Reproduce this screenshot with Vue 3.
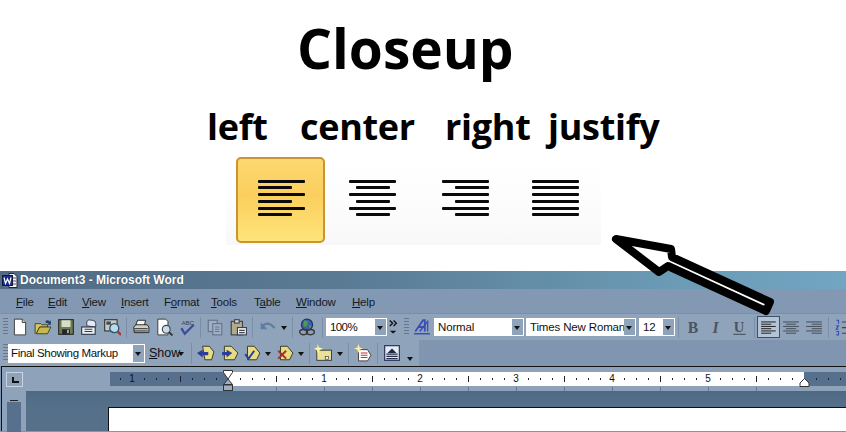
<script setup>
const linesets = {
  left: [47, 34, 47, 34, 47, 34],
  center: [47, 34, 47, 34, 47, 34],
  right: [47, 34, 47, 34, 47, 34],
  justify: [47, 47, 47, 47, 47, 47]
}
const closeup = [
  { id: 'left', cls: 'btn-active' },
  { id: 'center', cls: 'btn-center' },
  { id: 'right', cls: 'btn-right' },
  { id: 'justify', cls: 'btn-justify' }
]
const labels = [
  { t: 'left', w: 93 },
  { t: 'center', w: 145 },
  { t: 'right', w: 103 },
  { t: 'justify', w: 120 }
]
const menus = [
  ['F', 'ile', 32], ['E', 'dit', 34], ['V', 'iew', 39], ['I', 'nsert', 43],
  ['F', 'o', 47, 'rmat'], ['T', 'ools', 43], ['T', 'a', 42, 'ble'], ['W', 'indow', 56], ['H', 'elp', 30]
]
const K = '#1c1c1c'
const icons = {
  newdoc: `<path d="M3 1h7l3 3v11H3z" fill="#fff" stroke="#333" stroke-width=".8"/><path d="M10 1v3h3" fill="#ddd" stroke="#333" stroke-width=".8"/>`,
  open: `<path d="M1 14V5h5l1 1h5v2H5l-3 6" fill="#d8c860" stroke="#3d3d20" stroke-width=".8"/><path d="M2 14l3-6h10l-3 6z" fill="#c8b84e" stroke="#3d3d20" stroke-width=".8"/><path d="M10 3q2-2 4 0l1-1v4h-3l1-1q-1-1-2-.4" fill="#22406a"/>`,
  save: `<rect x="1.500" y="1.500" width="13" height="13" fill="#6b7d55" stroke="#282828"/><rect x="4" y="2" width="8" height="6" fill="#d8dcc8"/><rect x="4.500" y="10" width="7" height="4.500" fill="#22282a"/><rect x="9" y="10.500" width="1.500" height="3" fill="#b8c0b0"/>`,
  permission: `<path d="M6 7V3.500a3 2.500 0 0 1 4-1.500h1a3 3 0 0 1 3 3v3z" fill="#e6eaf0" stroke="#30384a" stroke-width=".8"/><rect x="1.500" y="8" width="12" height="6.500" fill="#eef0f4" stroke="#30384a"/><path d="M4 10h7M4 12h7" stroke="#30384a"/>`,
  search: `<rect x="1.500" y="1.500" width="11" height="10" fill="#c8ccc8" stroke="#303838"/><path d="M3 3h4v3H3zM7 7h3v3H7z" fill="#424a50"/><circle cx="10" cy="9" r="4" fill="#b8dce8" stroke="#305070" stroke-width="1.200"/><path d="M13 12l3 3" stroke="#b03030" stroke-width="2"/>`,
  print: `<path d="M5 2h7l-1 5H3z" fill="#f4f4f0" stroke="${K}" stroke-width=".8"/><path d="M1.500 8l2-2h10l1.500 2v5h-13z" fill="#d0d0c8" stroke="${K}" stroke-width=".8"/><path d="M2 9.500h12M2 11.500h12" stroke="${K}" stroke-width=".8"/>`,
  preview: `<path d="M2.500 1h7l2 2v12h-9z" fill="#fff" stroke="#333" stroke-width=".8"/><circle cx="10" cy="10" r="3.500" fill="#c8dcea" stroke="#384858"/><path d="M12.500 12.500l3 3" stroke="#303030" stroke-width="1.600"/>`,
  spell: `<text x="3" y="6" font-size="5.500" font-family="Liberation Sans" fill="#3a3f55">ABC</text><path d="M3 9l3 5 8-8" fill="none" stroke="#3b4c9a" stroke-width="2"/>`,
  copy: `<rect x="2" y="2" width="8" height="10" fill="#9fb0c4" stroke="#64748a"/><rect x="6" y="5" width="8" height="10" fill="#9fb0c4" stroke="#64748a"/><path d="M8 8h4M8 10h4M8 12h4" stroke="#64748a"/>`,
  paste: `<rect x="2" y="3" width="10" height="12" fill="#b4aa88" stroke="#3a4250"/><rect x="5" y="1.500" width="4" height="3" fill="#ddd" stroke="#3a4250"/><rect x="7.500" y="8.500" width="8" height="6.500" fill="#f0f4f8" stroke="#3a4250"/><path d="M9 11h5M9 13h5" stroke="#3a4250"/>`,
  undo: `<path d="M3 7q5-5 11 2" fill="none" stroke="#5f7da0" stroke-width="2"/><path d="M1.500 4v6h6z" fill="#5f7da0"/>`,
  globe: `<circle cx="8" cy="6" r="5" fill="#3d5fa8" stroke="#24305c"/><path d="M5 2l4 1-1 4-3 1zM10 6l2 1-2 3z" fill="#4f9a50"/><ellipse cx="5" cy="12.500" rx="3.500" ry="2.300" fill="none" stroke="#3a3a3a" stroke-width="1.300"/><ellipse cx="11" cy="12.500" rx="3.500" ry="2.300" fill="none" stroke="#3a3a3a" stroke-width="1.300"/>`,
  more: `<path d="M3 1l3 3-3 3M7 1l3 3-3 3" fill="none" stroke="#111" stroke-width="1.400"/><path d="M3 12h7l-3.500 3z" fill="#111"/>`,
  styleA: `<path d="M2 12L9 2h1.500v10M5 8h6" fill="none" stroke="#3a4eb4" stroke-width="1.600"/><path d="M6 12L13 3v9" fill="none" stroke="#3a4eb4" stroke-width="1.200"/><path d="M1 14h14" stroke="#3a4eb4" stroke-width="1.300"/>`,
  prev: `<path d="M5 2h6l4 5-2 7H7z" fill="#e8dc82" stroke="#303020" stroke-width=".8"/><path d="M0 8l5-3v2h5v3H5v2z" fill="#2b3f9a"/>`,
  next: `<path d="M3 2h6l6 6-3 6H3z" fill="#e8dc82" stroke="#303020" stroke-width=".8"/><path d="M10 8L5 5v2H1v3h4v2z" fill="#2b3f9a"/>`,
  accept: `<path d="M4 2h6l5 6-3 6H4z" fill="#e8dc82" stroke="#303020" stroke-width=".8"/><path d="M2 9l3 4 5-7" fill="none" stroke="#2b3f9a" stroke-width="1.800"/>`,
  reject: `<path d="M4 2h6l5 6-3 6H4z" fill="#e8dc82" stroke="#303020" stroke-width=".8"/><path d="M2 6l7 7M9 6l-7 7" stroke="#a83030" stroke-width="1.800"/>`,
  comment: `<rect x="2.500" y="5.500" width="13" height="9" fill="#e8e296" stroke="#333" stroke-width=".8"/><rect x="10" y="11" width="3" height="2.500" fill="#fff" stroke="#333" stroke-width=".6"/><path d="M3 0l1.500 3L8 4 5 5.500 4 9 2.500 5.500 0 4l3-1z" fill="#fff3a0"/>`,
  reviewing: `<path d="M4 5h8l3 5-3 5H4z" fill="#fff" stroke="#433" stroke-width=".8"/><path d="M6 8h6M6 10h6M6 12h6" stroke="#c03040"/><path d="M4 0l1 3 3 1-3 1-1 3-1-3-3-1 3-1z" fill="#fff0a0"/>`,
  track: `<rect x="1.500" y="1.500" width="13" height="13" fill="#e6ecf6" stroke="#222c50"/><path d="M8 4l4 4H4z" fill="#202848"/><path d="M3 9h10M3 11h10M3 13h10" stroke="#202848" stroke-width="1.200"/>`,
  bold: `<text x="2.500" y="13" font-size="14" font-weight="700" font-family="Liberation Serif" fill="#4b5460">B</text>`,
  italic: `<text x="4" y="13" font-size="14" font-style="italic" font-weight="700" font-family="Liberation Serif" fill="#4b5460">I</text>`,
  under: `<text x="2.500" y="12" font-size="13" font-weight="700" font-family="Liberation Serif" fill="#4b5460">U</text><path d="M2 14.500h11" stroke="#4b5460"/>`,
  aleft: `<path d="M1 3.500h13M1 5.500h9M1 7.500h13M1 9.500h9M1 11.500h13M1 13.500h9" stroke="#111" stroke-width=".8"/>`,
  acenter: `<path d="M1 3.500h14M3.500 5.500h9M1 7.500h14M3.500 9.500h9M1 11.500h14M3.500 13.500h9" stroke="#3c4450" stroke-width=".8"/>`,
  aright: `<path d="M1 3.500h14M6 5.500h9M1 7.500h14M6 9.500h9M1 11.500h14M6 13.500h9" stroke="#3c4450" stroke-width=".8"/>`,
  numbers: `<path d="M2 2h2v3M2 7h2l-2 3h2M2 12h2v3H2" fill="none" stroke="#3a4eb4"/><path d="M7 3.500h9M7 8.500h9M7 13.500h9" stroke="#3c4450"/>`
}
const row1 = [
  { k: 'grip' }, { k: 'i', n: 'newdoc', w: 23 }, { k: 'i', n: 'open', w: 23 }, { k: 'i', n: 'save', w: 23 },
  { k: 'i', n: 'permission', w: 23 }, { k: 'i', n: 'search', w: 23 }, { k: 's', w: 6 },
  { k: 'i', n: 'print', w: 23 }, { k: 'i', n: 'preview', w: 23 }, { k: 'i', n: 'spell', w: 23 }, { k: 's', w: 5 },
  { k: 'i', n: 'copy', w: 23 }, { k: 'i', n: 'paste', w: 23 }, { k: 's', w: 7 },
  { k: 'i', n: 'undo', w: 23 }, { k: 'd', w: 10 }, { k: 's', w: 6 },
  { k: 'i', n: 'globe', w: 23 }, { k: 's', w: 8 },
  { k: 'c', t: '100%', w: 61, cls: 'c-zoom' }, { k: 'i', n: 'more', w: 15 }, { k: 'gap', w: 2 }, { k: 'grip' },
  { k: 'i', n: 'styleA', w: 25 }, { k: 'c', t: 'Normal', w: 90, cls: 'c-style' }, { k: 'gap', w: 2 },
  { k: 'c', t: 'Times New Roman', w: 110, cls: 'c-style' }, { k: 'gap', w: 3 }, { k: 'c', t: '12', w: 36, cls: 'c-style' },
  { k: 's', w: 7 }, { k: 'i', n: 'bold', w: 23 }, { k: 'i', n: 'italic', w: 23 }, { k: 'i', n: 'under', w: 23 }, { k: 's', w: 6 },
  { k: 'i', n: 'aleft', w: 23, on: true }, { k: 'i', n: 'acenter', w: 22 }, { k: 'i', n: 'aright', w: 23 }, { k: 's', w: 7 },
  { k: 'i', n: 'numbers', w: 22 }
]
const row2 = [
  { k: 'grip' }, { k: 'c', t: 'Final Showing Markup', w: 137, cls: 'c-markup' }, { k: 'show' }, { k: 's', w: 6 },
  { k: 'i', n: 'prev', w: 24 }, { k: 'i', n: 'next', w: 23 }, { k: 'i', n: 'accept', w: 22 }, { k: 'd', w: 10 },
  { k: 'i', n: 'reject', w: 23 }, { k: 'd', w: 10 }, { k: 's', w: 6 },
  { k: 'i', n: 'comment', w: 22 }, { k: 'd', w: 11 }, { k: 's', w: 7 },
  { k: 'i', n: 'reviewing', w: 22 }, { k: 's', w: 7 }, { k: 'i', n: 'track', w: 22 }, { k: 'd', w: 13, low: true }
]
const marks = []
for (let i = -9; i <= 54; i++) {
  const x = i * 12
  if (x < -118 || x > 618) continue
  if (i === 0 || i === 48) continue
  if (i % 8 === 0) marks.push({ x, kind: 'num', t: String(Math.abs(i / 8)) })
  else if (i % 4 === 0) marks.push({ x, kind: 'half' })
  else marks.push({ x, kind: 'dot' })
}
const under = [1, 2, 3, 4, 5, 6, 7, 8, 9, 10, 11].map((n) => n * 48)
</script>

<template>
  <div class="page">
    <h1 class="title">Closeup</h1>
    <div class="labels">
      <span v-for="l in labels" :key="l.t" :style="{ width: l.w + 'px' }">{{ l.t }}</span>
    </div>
    <div class="closeup">
      <div v-for="b in closeup" :key="b.id" class="big-btn" :class="b.cls">
        <div class="lines" :class="'al-' + b.id">
          <i v-for="(w, n) in linesets[b.id]" :key="n" :style="{ width: w + 'px' }"></i>
        </div>
      </div>
    </div>

    <section class="word">
      <header class="titlebar">
        <svg class="appicon" width="16" height="15" viewBox="0 0 16 15">
          <path d="M7 .5h5l3 3v11H7z" fill="#f4f4f4" stroke="#223"/>
          <rect x="0.500" y="2.500" width="10" height="10" fill="#1c2b8e" stroke="#101840"/>
          <path d="M2 4.500l1.500 6L5.500 6l2 4.500L9 4.500" fill="none" stroke="#fff" stroke-width="1.200"/>
          <path d="M11 5h3M11 8h3M11 11h3" stroke="#556"/>
        </svg>
        <span>Document3 - Microsoft Word</span>
      </header>
      <nav class="menubar">
        <span v-for="m in menus" :key="m[0] + m[1]" class="menu" :style="{ width: m[2] + 'px' }">
          <template v-if="m[3]">{{ m[0] }}<u>{{ m[1] }}</u>{{ m[3] }}</template>
          <template v-else><u>{{ m[0] }}</u>{{ m[1] }}</template>
        </span>
      </nav>

      <div v-for="(row, r) in [row1, row2]" :key="r" class="toolbar" :class="'tb' + r">
        <template v-for="(it, i) in row" :key="i">
          <span v-if="it.k === 'grip'" class="grip"></span>
          <span v-else-if="it.k === 'gap'" class="gap" :style="{ width: it.w + 'px' }"></span>
          <span v-else-if="it.k === 's'" class="sep" :style="{ width: it.w + 'px' }"></span>
          <span v-else-if="it.k === 'd'" class="dd" :class="{ low: it.low }" :style="{ width: it.w + 'px' }"></span>
          <span v-else-if="it.k === 'show'" class="show"><u>S</u>how<b></b></span>
          <span v-else-if="it.k === 'c'" class="combo" :class="it.cls" :style="{ width: it.w + 'px' }">
            <span class="combo-text">{{ it.t }}</span><span class="combo-arrow"></span>
          </span>
          <span v-else class="tool" :class="{ on: it.on }" :style="{ width: it.w + 'px' }">
            <svg width="18" height="18" viewBox="0 0 16 16" v-html="icons[it.n]"></svg>
          </span>
        </template>
      </div>

      <div class="rulerrow">
        <span class="corner"><i></i></span>
        <div class="ruler">
          <span class="r-dark r-left"></span><span class="r-white"></span><span class="r-dark r-right"></span>
          <template v-for="m in marks" :key="m.x">
            <span v-if="m.kind === 'num'" class="r-num" :style="{ left: 118 + m.x + 'px' }">{{ m.t }}</span>
            <span v-else :class="m.kind === 'half' ? 'r-half' : 'r-dot'" :style="{ left: 118 + m.x + 'px' }"></span>
          </template>
          <span v-for="u in under" :key="'u' + u" class="r-under" :style="{ left: 118 + u + 'px' }"></span>
          <svg class="indent-l" width="12" height="22" viewBox="0 0 12 22">
            <path d="M1.500.500h9v2L6 9 1.500 2.500z" fill="#fff" stroke="#333"/>
            <path d="M6 9l4.500 5.500h-9z" fill="#9fb0c4" stroke="#333"/>
            <rect x="1.500" y="15" width="9" height="5.500" fill="#9fb0c4" stroke="#333"/>
          </svg>
          <svg class="indent-r" width="11" height="9" viewBox="0 0 11 9">
            <path d="M5.500.500l4.500 4.500v3.500H1V5z" fill="#fff" stroke="#333"/>
          </svg>
        </div>
      </div>
      <div class="editor">
        <div class="vruler"><i></i><b></b></div>
        <div class="desk"><div class="doc"></div></div>
      </div>
    </section>

    <svg class="arrow" width="846" height="432" viewBox="0 0 846 432">
      <path d="M616 239 L671 249 L672 257 L770 302 L766 311 L668 266 L659 272 Z" fill="#fff" stroke="#000" stroke-width="8" stroke-linejoin="round"/>
    </svg>
  </div>
</template>

<style>
html, body { margin: 0; background: #fff; overflow: hidden; }
</style>

<style scoped>
.page {
  position: relative;
  width: 846px;
  height: 432px;
  overflow: hidden;
  background: #fff;
  font-family: "Liberation Sans", Arial, sans-serif;
}
.title {
  margin: 0;
  height: 99px;
  padding-left: 297px;
  font: 700 55px/96px "Open Sans", sans-serif;
  color: #000;
  box-sizing: border-box;
}
.labels {
  display: flex;
  height: 58px;
  padding-left: 207px;
  font: 700 36px/56px "Open Sans", sans-serif;
  color: #000;
  letter-spacing: -0.3px;
}
.labels span { flex: none; white-space: nowrap; }

.closeup {
  display: flex;
  align-items: center;
  width: 375px;
  height: 88px;
  margin-left: 226px;
  padding-left: 10px;
  box-sizing: border-box;
  background: linear-gradient(#fff 0%, #fdfdfd 50%, #f8f8f8 100%);
}
.big-btn { display: flex; align-items: center; flex: none; height: 86px; margin-top: -2px; }
.btn-active {
  width: 89px;
  padding-left: 1px;
  justify-content: center;
  box-sizing: border-box;
  border: 2px solid #c8952f;
  border-radius: 5px;
  background: linear-gradient(#fdd76f 0%, #fbcf5e 45%, #ffe47a 100%);
}
.btn-center { margin-left: 24px; }
.btn-right { margin-left: 46px; }
.btn-justify { margin-left: 43px; }
.lines { display: flex; flex-direction: column; gap: 3.7px; width: 47px; margin-top: -4px; }
.lines i { display: block; height: 3px; background: #0a0a0a; border-radius: 1px; }
.al-center { align-items: center; }
.al-right { align-items: flex-end; }

.word {
  margin-top: 26px;
  height: 161px;
  background: #8096b0;
  color: #000;
  font-size: 12px;
}
.titlebar {
  display: flex;
  align-items: center;
  height: 18px;
  padding-left: 2px;
  gap: 2px;
  background: linear-gradient(90deg, #516b85 0%, #5a7a94 40%, #6b9bb5 80%, #71a5c2 100%);
  color: #fff;
  font: 700 12px/18px "Liberation Sans", sans-serif;
  text-shadow: 0 0 1px #2a3a50;
}
.appicon { flex: none; }
.menubar {
  display: flex;
  align-items: center;
  height: 24px;
  padding: 1px 0 0 16px;
  box-sizing: border-box;
  font-size: 11.500px;
  letter-spacing: -0.2px;
  background: #8398b2;
}
.menu { flex: none; color: #141a24; white-space: nowrap; }
.toolbar {
  display: flex;
  align-items: center;
  box-sizing: border-box;
  padding-left: 3px;
  background: #8fa3ba;
}
.tb0 { height: 27px; border-top: 1px solid #7a8faa; }
.tb1 { height: 26px; width: 419px; }
.gap { flex: none; }
.grip {
  flex: none;
  width: 5px;
  height: 18px;
  background: repeating-linear-gradient(#66788f 0 1px, transparent 1px 3px);
}
.tool {
  flex: none;
  display: flex;
  align-items: center;
  justify-content: center;
  height: 22px;
  box-sizing: border-box;
}
.tool.on {
  border: 1px solid #3c4f6b;
  background: #b4c3d6;
}
.sep {
  flex: none;
  height: 21px;
  background: linear-gradient(#7a8ea8, #7a8ea8) center / 1px 100% no-repeat;
}
.dd {
  flex: none;
  height: 22px;
  position: relative;
}
.dd::after, .show b {
  content: "";
  position: absolute;
  left: 50%;
  top: 10px;
  margin-left: -3px;
  border: 3px solid transparent;
  border-top: 4px solid #111;
  border-bottom: 0;
}
.dd.low::after { top: 15px; }
.show {
  flex: none;
  position: relative;
  width: 39px;
  margin-left: 4px;
  font-size: 12.500px;
  color: #111;
  box-sizing: border-box;
}
.show b { left: 32px; top: 6px; }
.combo {
  flex: none;
  display: flex;
  height: 18px;
  background: #fff;
  box-sizing: border-box;
  border: 1px solid #fff;
  overflow: hidden;
}
.combo-text {
  flex: 1;
  min-width: 0;
  padding-left: 3px;
  font-size: 11.500px;
  letter-spacing: -0.15px;
  line-height: 16px;
  color: #111;
  white-space: nowrap;
  overflow: hidden;
}
.c-zoom .combo-text { letter-spacing: -0.6px; }
.c-markup { height: 19px; }
.c-markup .combo-text { padding-left: 2px; font-size: 11.500px; letter-spacing: -0.35px; line-height: 17px; }
.combo-arrow {
  flex: none;
  position: relative;
  width: 11px;
  background: #8fa3ba;
}
.combo-arrow::after {
  content: "";
  position: absolute;
  left: 2px;
  top: 7px;
  border: 3.500px solid transparent;
  border-top: 4px solid #111;
  border-bottom: 0;
}

.rulerrow {
  display: flex;
  height: 25px;
  margin-left: 1px;
  border-top: 1px solid #111;
  border-left: 1px solid #111;
  box-sizing: border-box;
  background: #8ea2b9;
}
.corner {
  flex: none;
  width: 17px;
  height: 15px;
  margin: 5px 0 0 4px;
  box-sizing: border-box;
  border: 1px solid #c8d4e2;
  position: relative;
}
.corner i {
  position: absolute;
  left: 5px;
  top: 4px;
  width: 5px;
  height: 4px;
  border-left: 2px solid #111;
  border-bottom: 2px solid #111;
}
.ruler {
  position: relative;
  flex: 1;
  display: flex;
  height: 14px;
  margin: 5px 0 0 87px;
}
.r-dark { background: #56708e; }
.r-left { width: 118px; }
.r-white { width: 576px; background: #fff; }
.r-right { flex: 1; }
.r-num {
  position: absolute;
  top: 0;
  width: 12px;
  margin-left: -6px;
  text-align: center;
  font-size: 10px;
  line-height: 14px;
  color: #111;
}
.r-dot, .r-half { position: absolute; background: #222; }
.r-dot { top: 6px; width: 1px; height: 2px; }
.r-half { top: 4px; width: 1px; height: 6px; }
.r-under { position: absolute; top: 15px; width: 1px; height: 4px; background: #66788f; }
.indent-l { position: absolute; left: 112px; top: -2px; }
.indent-r { position: absolute; left: 689px; top: 6px; }
.editor {
  display: flex;
  height: 40px;
  margin-left: 1px;
  background: #8ea2b9;
  border-left: 1px solid #111;
}
.vruler {
  flex: none;
  position: relative;
  width: 24px;
}
.vruler b {
  position: absolute;
  left: 5px;
  top: 11px;
  width: 14px;
  height: 30px;
  background: #56708e;
}
.vruler i {
  position: absolute;
  left: 8px;
  top: 9px;
  width: 8px;
  height: 1px;
  background: #222;
}
.desk {
  flex: 1;
  display: flex;
  justify-content: flex-end;
  align-items: flex-end;
  background: linear-gradient(#4e6984, #567089 16px);
}
.doc {
  width: 738px;
  height: 24px;
  box-sizing: border-box;
  background: #fff;
  border: solid #111;
  border-width: 1px 0 0 1px;
}
.arrow { position: absolute; left: 0; top: 0; pointer-events: none; }
</style>
